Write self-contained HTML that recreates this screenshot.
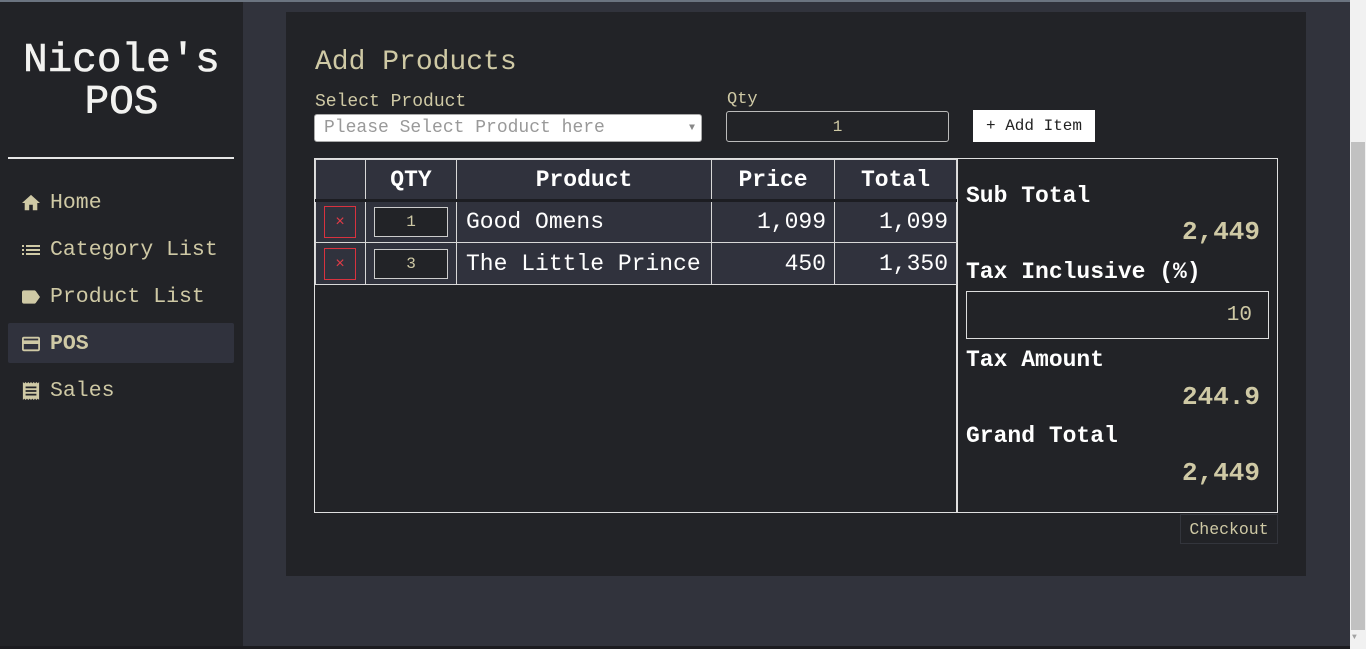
<!DOCTYPE html>
<html><head><meta charset="utf-8"><style>
*{box-sizing:border-box;margin:0;padding:0}
body{width:1366px;height:649px;overflow:hidden;background:#31333c;font-family:"Liberation Mono",monospace;position:relative;color:#cfc9a5}
.a{position:absolute;white-space:nowrap}
#side{left:0;top:0;width:243px;height:649px;background:#222327}
.nav{left:22px;font-size:21.5px;color:#cfc9a5;display:flex;align-items:center}
.nav svg{margin-right:10px}
#card{left:286px;top:12px;width:1020px;height:564px;background:#222327}
table{border-collapse:collapse;position:absolute;left:315px;top:159px;width:642px}
td,th{border:1px solid #d8d8d8;background:#30323d;color:#fff;font-size:23px;height:42px}
th{height:41px;border-bottom:3px solid #1c1d22}
.r{text-align:right;padding-right:8px}
.x{width:32px;height:32px;border:1px solid #d9323f;color:#e23b47;font-size:16px;text-align:center;line-height:30px;margin-left:8px}
.q{width:74px;height:30px;border:1px solid #ccc;background:#222327;color:#cfc9a5;font-size:16px;text-align:center;line-height:28px;margin-left:8px}
.lbl{font-size:23px;font-weight:bold;color:#fff}
.val{font-size:26px;font-weight:bold;color:#cfc9a5}
</style></head><body>
<div id="side" class="a">
 <div class="a" style="left:0;top:40px;width:243px;text-align:center;font-size:41px;line-height:42px;color:#f2f2f0;-webkit-text-stroke:0.6px #f2f2f0">Nicole's<br>POS</div>
 <div class="a" style="left:8px;top:157px;width:226px;height:2px;background:#e6e6e6"></div>
 <div class="a" style="left:8px;top:323px;width:226px;height:40px;background:#30323d;border-radius:2px"></div>
 <div class="a nav" style="top:191px"><svg width="18" height="18" viewBox="2 3 20 18"><path fill="#cfc9a5" d="M10 20v-6h4v6h5v-8h3L12 3 2 12h3v8z"/></svg>Home</div>
 <div class="a nav" style="top:238px"><svg width="18" height="18" viewBox="3 3 18 18"><path fill="#cfc9a5" d="M3 13h2v-2H3zm0 4h2v-2H3zm0-8h2V7H3zm4 4h14v-2H7zm0 4h14v-2H7zM7 7v2h14V7z"/></svg>Category List</div>
 <div class="a nav" style="top:285px"><svg width="18" height="18" viewBox="3 3 19 18"><path fill="#cfc9a5" d="M17.6 5.8C17.3 5.3 16.6 5 16 5H5c-1.1 0-2 .9-2 2v10c0 1.1.9 2 2 2h11c.6 0 1.2-.3 1.6-.8L22 12z"/></svg>Product List</div>
 <div class="a nav" style="top:332px;font-weight:bold"><svg width="18" height="18" viewBox="2 3 20 18"><path fill="#cfc9a5" d="M20 4H4c-1.1 0-2 .9-2 2v12c0 1.1.9 2 2 2h16c1.1 0 2-.9 2-2V6c0-1.1-.9-2-2-2zm0 14H4v-6h16zm0-10H4V6h16z"/></svg>POS</div>
 <div class="a nav" style="top:379px"><svg width="18" height="18" viewBox="3 2 18 20"><path fill="#cfc9a5" d="M19.5 3.5 18 2l-1.5 1.5L15 2l-1.5 1.5L12 2l-1.5 1.5L9 2 7.5 3.5 6 2 4.5 3.5 3 2v20l1.5-1.5L6 22l1.5-1.5L9 22l1.5-1.5L12 22l1.5-1.5L15 22l1.5-1.5L18 22l1.5-1.5L21 22V2zM18 17H6v-2h12zm0-4H6v-2h12zm0-4H6V7h12z"/></svg>Sales</div>
</div>
<div class="a" style="left:0;top:0;width:1350px;height:2px;background:#6b7480"></div>
<div id="card" class="a"></div>
<div class="a" style="left:315px;top:47px;font-size:28px;color:#cfc9a5">Add Products</div>
<div class="a" style="left:315px;top:92px;font-size:18px">Select Product</div>
<div class="a" style="left:314px;top:114px;width:388px;height:28px;background:#fff;border:1px solid #aaa;border-radius:3px;font-size:18px;color:#999;padding-left:9px;line-height:27px">Please Select Product here<span style="position:absolute;right:6px;top:0;font-size:10px;color:#888">▼</span></div>
<div class="a" style="left:727px;top:90px;font-size:17px">Qty</div>
<div class="a" style="left:726px;top:111px;width:223px;height:31px;border:1px solid #bbb;border-radius:3px;text-align:center;font-size:16px;line-height:30px">1</div>
<div class="a" style="left:973px;top:110px;width:122px;height:32px;background:#fff;color:#222;font-size:16px;text-align:center;line-height:32px">+ Add Item</div>
<div class="a" style="left:314px;top:158px;width:964px;height:355px;border:1px solid #e0e0e0"></div>
<div class="a" style="left:956px;top:158px;width:2px;height:355px;background:#e0e0e0"></div>
<table>
<tr><th style="width:50px"></th><th style="width:91px">QTY</th><th style="width:255px">Product</th><th style="width:123px">Price</th><th>Total</th></tr>
<tr><td><div class="x">×</div></td><td><div class="q">1</div></td><td style="padding-left:9px">Good Omens</td><td class="r">1,099</td><td class="r">1,099</td></tr>
<tr><td><div class="x">×</div></td><td><div class="q">3</div></td><td style="padding-left:9px">The Little Prince</td><td class="r">450</td><td class="r">1,350</td></tr>
</table>
<div class="a lbl" style="left:966px;top:183px">Sub Total</div>
<div class="a val" style="right:106px;top:217px">2,449</div>
<div class="a lbl" style="left:966px;top:259px">Tax Inclusive (%)</div>
<div class="a" style="left:966px;top:291px;width:303px;height:48px;border:1px solid #ddd;text-align:right;padding-right:16px;line-height:48px;font-size:21px">10</div>
<div class="a lbl" style="left:966px;top:347px">Tax Amount</div>
<div class="a val" style="right:106px;top:382px">244.9</div>
<div class="a lbl" style="left:966px;top:423px">Grand Total</div>
<div class="a val" style="right:106px;top:458px">2,449</div>
<div class="a" style="left:1180px;top:514px;width:98px;height:30px;border:1px solid #33353c;font-size:16.5px;text-align:center;line-height:29px">Checkout</div>
<div class="a" style="left:1350px;top:0;width:16px;height:649px;background:#f1f1f1"></div>
<div class="a" style="left:1351px;top:142px;width:14px;height:488px;background:#c1c1c1"></div>
<div class="a" style="left:1352px;top:633px;font-size:8px;color:#a3a3a3">▼</div>
<div class="a" style="left:0;top:646px;width:1350px;height:3px;background:#1c1c20"></div>
</body></html>
